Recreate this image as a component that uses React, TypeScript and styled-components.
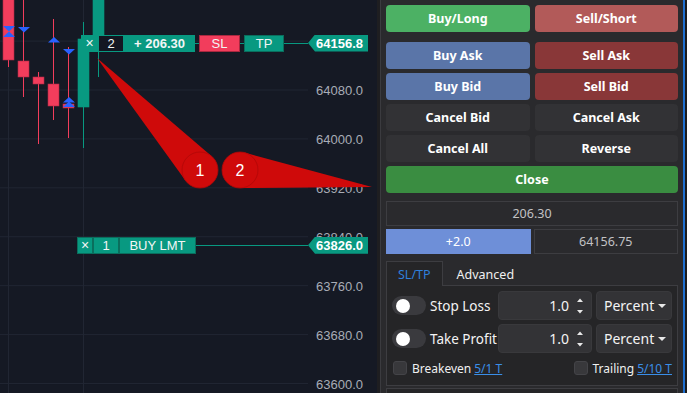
import React from 'react';
import styled, { createGlobalStyle } from 'styled-components';

const GlobalStyle = createGlobalStyle`
  html, body {
    margin: 0;
    padding: 0;
    background: #151924;
  }
  body {
    font-family: "Noto Sans", "Liberation Sans", sans-serif;
    overflow: hidden;
  }
  * { box-sizing: border-box; }
`;

const GREEN = '#089981';
const GREEN_EDGE = '#0a6e5d';
const RED = '#f23d5c';
const BLUE_MARK = '#2962ff';

const Page = styled.div`
  width: 687px;
  height: 393px;
  display: flex;
  overflow: hidden;
`;

const Chart = styled.div`
  position: relative;
  width: 377px;
  height: 100%;
  flex-shrink: 0;
  background: #151924;
  overflow: hidden;
  font-family: "Liberation Sans", Arial, sans-serif;
`;

const Plot = styled.svg`
  position: absolute;
  inset: 0;
`;

const Overlay = styled.svg`
  position: absolute;
  inset: 0;
  pointer-events: none;
`;

const AxisLabel = styled.div`
  position: absolute;
  right: 14px;
  transform: translateY(-50%);
  font-size: 13px;
  color: #a8acb6;
  line-height: 1;
`;

const OrderLine = styled.div<{ $left: number }>`
  position: absolute;
  left: ${p => p.$left}px;
  right: 9px;
  height: 17px;
  display: flex;
  align-items: center;
  font-size: 13px;
  color: #f2f6f5;
`;

const Cell = styled.div<{ $bg: string; $edge: string; $w: number }>`
  width: ${p => p.$w}px;
  height: 17px;
  flex-shrink: 0;
  display: flex;
  align-items: center;
  justify-content: center;
  background: ${p => p.$bg};
  border: 1px solid ${p => p.$edge};
  line-height: 1;
`;

const Connector = styled.div<{ $w?: number }>`
  height: 1px;
  background: ${GREEN};
  ${p => (p.$w ? `width: ${p.$w}px; flex-shrink: 0;` : 'flex: 1;')}
`;

const PriceTag = styled.div`
  width: 60px;
  height: 17px;
  flex-shrink: 0;
  background: ${GREEN};
  clip-path: polygon(0 50%, 7px 0, 100% 0, 100% 100%, 7px 100%);
  display: flex;
  align-items: center;
  justify-content: flex-end;
  padding-right: 5px;
  font-weight: 700;
  font-size: 13px;
  color: #fff;
`;

const Divider = styled.div`
  width: 3px;
  flex-shrink: 0;
  background: #1e1e21;
`;

const Panel = styled.div`
  flex: 1;
  display: flex;
  flex-direction: column;
  background: #2a2a2d;
  border-left: 1px solid #3b3b3f;
  border-right: 2px solid #1f6fcf;
  padding: 5px 5px 0 5px;
  color: #fff;
  overflow: hidden;

  & > * {
    flex-shrink: 0;
  }
`;

const Gutter = styled.div`
  width: 2px;
  flex-shrink: 0;
  background: #1b1b1d;
`;

const ButtonGrid = styled.div<{ $mb?: number }>`
  display: grid;
  grid-template-columns: 1fr 1fr;
  column-gap: 5px;
  row-gap: 4px;
  margin-bottom: ${p => p.$mb ?? 0}px;
`;

const ActionButton = styled.button<{ $tone: string; $wide?: boolean }>`
  height: 27px;
  border: none;
  border-radius: 4px;
  background: ${p => p.$tone};
  color: #fff;
  font-family: "Noto Sans", "Liberation Sans", sans-serif;
  font-weight: 700;
  font-size: 12.5px;
  padding: 0;
  ${p => (p.$wide ? 'grid-column: 1 / -1;' : '')}
`;

const ValueField = styled.div<{ $active?: boolean }>`
  height: 25px;
  display: flex;
  align-items: center;
  justify-content: center;
  font-size: 12.5px;
  color: ${p => (p.$active ? '#fff' : '#c2c2c4')};
  background: ${p => (p.$active ? '#6e8fd8' : 'transparent')};
  border: 1px solid ${p => (p.$active ? '#6e8fd8' : '#3d3d41')};
`;

const ValueRow = styled.div`
  display: grid;
  grid-template-columns: 1fr 1fr;
  gap: 3px;
  margin-top: 3px;
`;

const TabBar = styled.div`
  display: flex;
  height: 25px;
  margin-top: 7px;
  position: relative;
  z-index: 1;
`;

const Tab = styled.div<{ $active?: boolean }>`
  display: flex;
  align-items: center;
  padding: 0 ${p => (p.$active ? 11 : 13)}px;
  font-size: 12.5px;
  color: ${p => (p.$active ? '#2f80dc' : '#f0f0f0')};
  background: ${p => (p.$active ? '#252527' : 'transparent')};
  border: 1px solid ${p => (p.$active ? '#3d3d41' : 'transparent')};
  border-bottom: none;
`;

const TabContent = styled.div`
  margin-top: -1px;
  background: #252527;
  border: 1px solid #3d3d41;
  padding: 5px 5px 9px 5px;
  display: flex;
  flex-direction: column;
  gap: 4px;
`;

const SettingRow = styled.div`
  display: grid;
  grid-template-columns: minmax(0, 1fr) 94px 76px;
  column-gap: 4px;
  height: 29px;
`;

const LabelCell = styled.div`
  display: flex;
  align-items: center;
  gap: 4px;
  font-size: 13.5px;
  color: #f4f4f4;
  white-space: nowrap;
`;

const Toggle = styled.div`
  width: 34px;
  height: 19px;
  border-radius: 10px;
  background: #3a3a3e;
  display: flex;
  align-items: center;
  padding-left: 4px;
  flex-shrink: 0;
`;

const Knob = styled.div`
  width: 14px;
  height: 14px;
  border-radius: 50%;
  background: #fff;
`;

const InputBox = styled.div`
  background: #333336;
  border: 1px solid #39393c;
  border-radius: 4px;
  display: flex;
  align-items: center;
  font-size: 14px;
  color: #f4f4f4;
`;

const NumberValue = styled.span`
  flex: 1;
  text-align: right;
`;

const Spinner = styled.svg`
  width: 22px;
  height: 22px;
  flex-shrink: 0;
`;

const SelectValue = styled.span`
  flex: 1;
  padding-left: 7px;
`;

const Caret = styled.svg`
  width: 16px;
  height: 8px;
  flex-shrink: 0;
  margin-right: 3px;
`;

const CheckRow = styled.div`
  display: flex;
  justify-content: space-between;
  align-items: center;
  margin-top: 3px;
  padding-left: 1px;
  height: 16px;
  font-size: 12px;
  color: #f0f0f0;
`;

const CheckItem = styled.div`
  display: flex;
  align-items: center;
  gap: 5px;
`;

const CheckBox = styled.div`
  width: 14px;
  height: 14px;
  border-radius: 3px;
  background: #38383b;
  border: 1px solid #444448;
`;

const Link = styled.a`
  color: #3a8ee8;
  text-decoration: underline;
  margin-left: 3px;
`;

const NextSection = styled.div`
  margin-top: 2px;
  height: 20px;
  border: 1px solid #3d3d41;
  background: #252527;
`;

const priceToY = (p: number) => 90 + (64080 - p) * 0.6115;

const candles = [
  { x: 8, wt: -5, wb: 67, bt: -5, bb: 60, up: false },
  { x: 23, wt: -5, wb: 97, bt: 61, bb: 77, up: false },
  { x: 38, wt: 72, wb: 144, bt: 77, bb: 84, up: false },
  { x: 53, wt: 19, wb: 120, bt: 84, bb: 106, up: false },
  { x: 68, wt: 47, wb: 138, bt: 104, bb: 108, up: false },
  { x: 83, wt: 22, wb: 148, bt: 39, bb: 107, up: true },
  { x: 98, wt: -5, wb: 77, bt: -5, bb: 40, up: true },
];

const markers = [
  { x: 9, y: 26, down: true },
  { x: 9, y: 31.5, down: false },
  { x: 24, y: 27, down: true },
  { x: 54, y: 37, down: false },
  { x: 69, y: 49, down: true },
  { x: 69, y: 97, down: false },
  { x: 69, y: 101.5, down: false },
];

const axisPrices = [64080, 64000, 63920, 63840, 63760, 63680, 63600];

// tangent wedge from the tip of an annotation arrow to its circle
const wedge = (tx: number, ty: number, cx: number, cy: number, r: number) => {
  const dx = cx - tx;
  const dy = cy - ty;
  const d = Math.hypot(dx, dy);
  const ux = dx / d;
  const uy = dy / d;
  const c = r / d;
  const s = Math.sqrt(1 - c * c);
  const ax = cx - r * c * ux - r * s * uy;
  const ay = cy - r * c * uy + r * s * ux;
  const bx = cx - r * c * ux + r * s * uy;
  const by = cy - r * c * uy - r * s * ux;
  return `${tx},${ty} ${ax},${ay} ${cx},${cy} ${bx},${by}`;
};

const annotations = [
  { n: '1', tx: 97, ty: 58, cx: 200, cy: 170 },
  { n: '2', tx: 372, ty: 187, cx: 240, cy: 170 },
];

const Triangle = ({ x, y, down }: { x: number; y: number; down: boolean }) => {
  const pts = down
    ? `${x - 6},${y} ${x + 6},${y} ${x},${y + 5.5}`
    : `${x},${y} ${x + 6},${y + 5.5} ${x - 6},${y + 5.5}`;
  return <polygon points={pts} fill={BLUE_MARK} />;
};

export default function App() {
  return (
    <>
      <GlobalStyle />
      <Page>
        <Chart>
          <Plot width={377} height={393}>
            {[64160, ...axisPrices].map(p => (
              <line key={p} x1={0} x2={308} y1={priceToY(p)} y2={priceToY(p)} stroke="#212633" strokeWidth={1} />
            ))}
            <line x1={8.5} x2={8.5} y1={0} y2={393} stroke="#212633" />
            <line x1={83.5} x2={83.5} y1={0} y2={393} stroke="#212633" />
            {candles.map((c, i) => {
              const col = c.up ? GREEN : RED;
              return (
                <g key={i}>
                  <rect x={c.x} y={c.wt} width={1} height={c.wb - c.wt} fill={col} />
                  <rect x={c.x - 5} y={c.bt} width={11} height={c.bb - c.bt} fill={col} stroke={c.up ? GREEN : '#b02a45'} strokeWidth={0.6} />
                </g>
              );
            })}
            {markers.map((m, i) => (
              <Triangle key={i} {...m} />
            ))}
          </Plot>

          {axisPrices.map(p => (
            <AxisLabel key={p} style={{ top: priceToY(p) }}>
              {p.toFixed(1)}
            </AxisLabel>
          ))}

          <OrderLine $left={81} style={{ top: priceToY(64156.8) - 8.5 }}>
            <Cell $w={17} $bg={GREEN} $edge={GREEN} style={{ fontSize: 14 }}>×</Cell>
            <Cell $w={26} $bg="#131722" $edge={GREEN}>2</Cell>
            <Cell $w={71} $bg={GREEN} $edge={GREEN} style={{ fontWeight: 700 }}>+ 206.30</Cell>
            <Connector $w={4} />
            <Cell $w={41} $bg={RED} $edge="#a8283f">SL</Cell>
            <Connector $w={4} />
            <Cell $w={40} $bg={GREEN} $edge={GREEN_EDGE}>TP</Cell>
            <Connector />
            <PriceTag>64156.8</PriceTag>
          </OrderLine>

          <OrderLine $left={77} style={{ top: priceToY(63826) - 8.5 }}>
            <Cell $w={16} $bg={GREEN} $edge={GREEN_EDGE} style={{ fontSize: 14 }}>×</Cell>
            <Cell $w={26} $bg={GREEN} $edge={GREEN_EDGE}>1</Cell>
            <Cell $w={77} $bg={GREEN} $edge={GREEN_EDGE}>BUY LMT</Cell>
            <Connector />
            <PriceTag>63826.0</PriceTag>
          </OrderLine>

          <Overlay width={377} height={393}>
            {annotations.map(a => (
              <g key={a.n}>
                <polygon points={wedge(a.tx, a.ty, a.cx, a.cy, 18)} fill="#cf0a0a" />
                <circle cx={a.cx} cy={a.cy} r={18} fill="#cf0a0a" stroke="#b00808" strokeWidth={0.8} />
                <text x={a.cx} y={a.cy + 6} textAnchor="middle" fill="#fff" fontSize={16} fontFamily="Liberation Sans, Arial, sans-serif">
                  {a.n}
                </text>
              </g>
            ))}
          </Overlay>
        </Chart>
        <Divider />
        <Panel>
          <ButtonGrid $mb={10}>
            <ActionButton $tone="#4cb164">Buy/Long</ActionButton>
            <ActionButton $tone="#b25a59">Sell/Short</ActionButton>
          </ButtonGrid>
          <ButtonGrid>
            <ActionButton $tone="#5a75a8">Buy Ask</ActionButton>
            <ActionButton $tone="#893738">Sell Ask</ActionButton>
            <ActionButton $tone="#5a75a8">Buy Bid</ActionButton>
            <ActionButton $tone="#893738">Sell Bid</ActionButton>
            <ActionButton $tone="#323235">Cancel Bid</ActionButton>
            <ActionButton $tone="#323235">Cancel Ask</ActionButton>
            <ActionButton $tone="#323235">Cancel All</ActionButton>
            <ActionButton $tone="#323235">Reverse</ActionButton>
            <ActionButton $tone="#3a8d41" $wide>Close</ActionButton>
          </ButtonGrid>

          <ValueField style={{ marginTop: 8 }}>206.30</ValueField>
          <ValueRow>
            <ValueField $active>+2.0</ValueField>
            <ValueField>64156.75</ValueField>
          </ValueRow>

          <TabBar>
            <Tab $active>SL/TP</Tab>
            <Tab>Advanced</Tab>
          </TabBar>
          <TabContent>
            {['Stop Loss', 'Take Profit'].map(label => (
              <SettingRow key={label}>
                <LabelCell>
                  <Toggle>
                    <Knob />
                  </Toggle>
                  {label}
                </LabelCell>
                <InputBox>
                  <NumberValue>1.0</NumberValue>
                  <Spinner viewBox="0 0 22 22">
                    <polygon points="8,7 11,3.5 14,7" fill="#e8e8e8" />
                    <polygon points="8,15 14,15 11,18.5" fill="#e8e8e8" />
                  </Spinner>
                </InputBox>
                <InputBox>
                  <SelectValue>Percent</SelectValue>
                  <Caret viewBox="0 0 16 8">
                    <polygon points="4,2 12,2 8,6" fill="#e8e8e8" />
                  </Caret>
                </InputBox>
              </SettingRow>
            ))}
            <CheckRow>
              <CheckItem>
                <CheckBox />
                <span>
                  Breakeven<Link>5/1 T</Link>
                </span>
              </CheckItem>
              <CheckItem>
                <CheckBox />
                <span>
                  Trailing<Link>5/10 T</Link>
                </span>
              </CheckItem>
            </CheckRow>
          </TabContent>
          <NextSection />
        </Panel>
        <Gutter />
      </Page>
    </>
  );
}
